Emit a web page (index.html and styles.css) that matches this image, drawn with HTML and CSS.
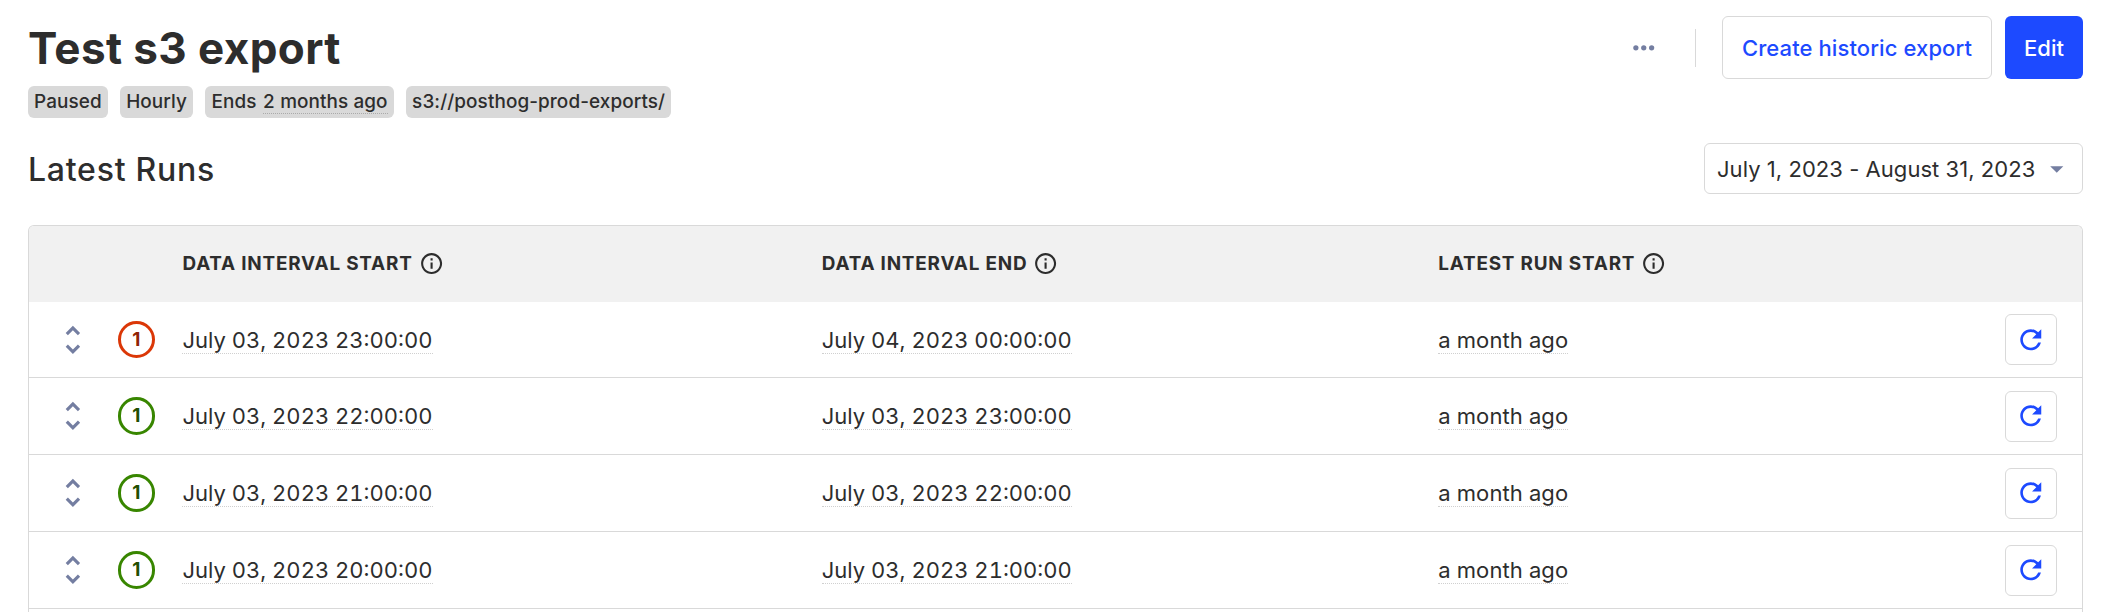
FILE: index.html
```html
<!DOCTYPE html>
<html lang="en">
<head>
<meta charset="utf-8">
<title>Test s3 export</title>
<link rel="stylesheet" href="styles.css">
</head>
<body>
<svg class="defs" aria-hidden="true">
  <symbol id="info" viewBox="0 0 24 24"><path d="M11 7h2v2h-2zm0 4h2v6h-2zm1-9C6.48 2 2 6.48 2 12s4.480 10 10 10 10-4.480 10-10S17.520 2 12 2zm0 18c-4.410 0-8-3.590-8-8s3.590-8 8-8 8 3.590 8 8-3.590 8-8 8z"/></symbol>
  <symbol id="unfold" viewBox="0 0 24 24"><path d="M12 5.83 15.17 9l1.410-1.410L12 3 7.410 7.590 8.830 9 12 5.830zm0 12.340L8.830 15l-1.410 1.410L12 21l4.590-4.590L15.170 15 12 18.170z"/></symbol>
  <symbol id="refresh" viewBox="0 0 24 24"><path d="M17.650 6.350C16.200 4.900 14.210 4 12 4c-4.420 0-7.990 3.580-7.990 8s3.570 8 7.990 8c3.730 0 6.840-2.550 7.730-6h-2.080c-.820 2.330-3.040 4-5.650 4-3.310 0-6-2.690-6-6s2.690-6 6-6c1.660 0 3.140.690 4.220 1.780L13 11h7V4l-2.350 2.350z"/></symbol>
</svg>
<main class="page">
  <header class="topbar">
    <h1 class="title">Test s3 export</h1>
    <div class="actions">
      <button class="more" aria-label="More"><svg class="icon" viewBox="0 0 24 24"><circle cx="6" cy="12" r="2"/><circle cx="12" cy="12" r="2"/><circle cx="18" cy="12" r="2"/></svg></button>
      <span class="divider"></span>
      <button class="button secondary">Create historic export</button>
      <button class="button primary">Edit</button>
    </div>
  </header>
  <div class="tags">
    <span class="tag">Paused</span>
    <span class="tag">Hourly</span>
    <span class="tag">Ends <span class="hint">2 months ago</span></span>
    <span class="tag">s3://posthog-prod-exports/</span>
  </div>
  <div class="section-head">
    <h2 class="subtitle">Latest Runs</h2>
    <button class="date-range">July 1, 2023 - August 31, 2023<svg class="icon" viewBox="0 0 24 24"><path d="M7 10l5 5 5-5z"/></svg></button>
  </div>
  <section class="table">
    <div class="row head">
      <span></span><span></span>
      <span class="label">Data interval start<svg class="info"><use href="#info"/></svg></span>
      <span class="label">Data interval end<svg class="info"><use href="#info"/></svg></span>
      <span class="label">Latest run start<svg class="info"><use href="#info"/></svg></span>
    </div>
    <div class="row">
      <svg class="unfold"><use href="#unfold"/></svg><span class="status failed">1</span>
      <span><span class="hint">July 03, 2023 23:00:00</span></span><span><span class="hint">July 04, 2023 00:00:00</span></span><span><span class="hint ago">a month ago</span></span>
      <button class="retry" aria-label="Retry"><svg class="icon"><use href="#refresh"/></svg></button>
    </div>
    <div class="row">
      <svg class="unfold"><use href="#unfold"/></svg><span class="status">1</span>
      <span><span class="hint">July 03, 2023 22:00:00</span></span><span><span class="hint">July 03, 2023 23:00:00</span></span><span><span class="hint ago">a month ago</span></span>
      <button class="retry" aria-label="Retry"><svg class="icon"><use href="#refresh"/></svg></button>
    </div>
    <div class="row">
      <svg class="unfold"><use href="#unfold"/></svg><span class="status">1</span>
      <span><span class="hint">July 03, 2023 21:00:00</span></span><span><span class="hint">July 03, 2023 22:00:00</span></span><span><span class="hint ago">a month ago</span></span>
      <button class="retry" aria-label="Retry"><svg class="icon"><use href="#refresh"/></svg></button>
    </div>
    <div class="row">
      <svg class="unfold"><use href="#unfold"/></svg><span class="status">1</span>
      <span><span class="hint">July 03, 2023 20:00:00</span></span><span><span class="hint">July 03, 2023 21:00:00</span></span><span><span class="hint ago">a month ago</span></span>
      <button class="retry" aria-label="Retry"><svg class="icon"><use href="#refresh"/></svg></button>
    </div>
    <div class="row last"></div>
  </section>
</main>
</body>
</html>
```
FILE: styles.css
```css
* { box-sizing: border-box; }
body {
  margin: 0;
  height: 612px;
  overflow: hidden;
  background: #fff;
  color: #2d2d2d;
  font: 22px/32px Inter, sans-serif;
}
button { font: inherit; color: inherit; background: none; margin: 0; padding: 0; }
svg { fill: currentColor; flex: none; }
.defs { position: absolute; width: 0; height: 0; }
.icon { display: block; width: 31.5px; height: 31.5px; }
.page { padding: 16px 19px 0 28px; }
.topbar { display: flex; justify-content: space-between; align-items: center; height: 63px; }
.title { margin: 0; font-size: 44px; line-height: 56px; font-weight: 700; letter-spacing: .4px; }
.actions { display: flex; align-items: center; }
.more { border: 0; color: #747ea1; }
.divider { width: 1px; height: 38px; margin: 0 26px 0 36px; background: #d9d9d9; }
.button { height: 63px; border-radius: 6px; font-weight: 500; white-space: nowrap; }
.secondary { width: 270px; border: 1px solid #d9d9d9; color: #1d4aff; letter-spacing: .1px; }
.primary { width: 78px; margin-left: 13px; border: 0; color: #fff; background: #1d4aff; }
.tags { display: flex; gap: 12.5px; margin-top: 7px; }
.tag {
  height: 32px;
  padding: 0 6px;
  border-radius: 6px;
  background: #d9d9d9;
  font-size: 18.9px;
  line-height: 31px;
  font-weight: 500;
  letter-spacing: .1px;
  white-space: nowrap;
}
.hint { display: inline-block; line-height: 25px; border-bottom: 1px dotted #d0d0d0; font-variant-numeric: tabular-nums; }
.ago { letter-spacing: .1px; }
.tag .hint { margin-left: 1px; line-height: 23px; border-color: #aaa; }
.section-head { display: flex; justify-content: space-between; align-items: center; height: 51px; margin-top: 25px; }
.subtitle { margin: 2px 0 0; font-size: 32px; line-height: 40px; font-weight: 500; letter-spacing: .75px; }
.date-range {
  display: flex;
  align-items: center;
  justify-content: space-between;
  width: 379px;
  height: 51px;
  padding: 0 10px 0 12px;
  border: 1px solid #d9d9d9;
  border-radius: 6px;
  letter-spacing: .05px;
  white-space: nowrap;
}
.date-range .icon { color: #747ea1; }
.table { height: 387px; margin-top: 31px; border: 1px solid #d9d9d9; border-radius: 6px 6px 0 0; border-bottom: 0; overflow: hidden; }
.row {
  display: grid;
  grid-template-columns: 63.7px 64.8px 639.3px 616.5px 1fr 51.5px;
  align-items: center;
  height: 77px;
  padding: 0 26px 0 25px;
  border-top: 1px solid #d9d9d9;
}
.head { height: 76px; border: 0; background: #f1f1f1; }
.head + .row { height: 75px; border: 0; }
.last { height: 4px; }
.label { display: flex; align-items: center; gap: 6px; font-size: 18.9px; font-weight: 700; letter-spacing: .8px; text-transform: uppercase; }
.info { width: 25.2px; height: 25.2px; }
.unfold { width: 37.8px; height: 37.8px; color: #747ea1; }
.status {
  width: 37.5px;
  height: 37.5px;
  border: 3px solid #388600;
  border-radius: 50%;
  color: #224f00;
  font-size: 18.9px;
  font-weight: 700;
  line-height: 32px;
  text-align: center;
}
.failed { border-color: #db3707; color: #8f2405; }
.retry { display: grid; place-items: center; width: 52px; height: 51px; border: 1px solid #d9d9d9; border-radius: 6px; color: #1d4aff; }
```
